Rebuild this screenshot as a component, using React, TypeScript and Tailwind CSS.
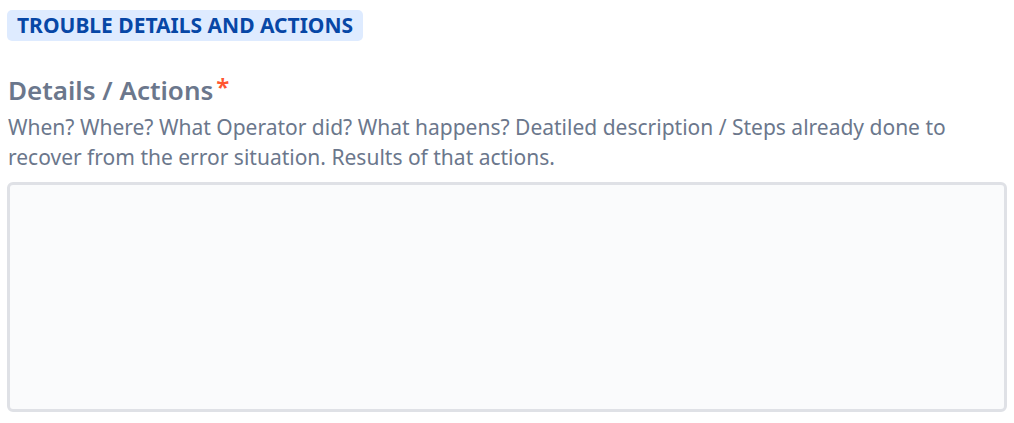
export default function App() {
  return (
    <div className="bg-white w-[1014px] h-[423px] overflow-hidden" style={{ fontFamily: '"Noto Sans", "Open Sans", sans-serif' }}>
      <div className="pl-[7px] pt-[10px]">
        <div className="inline-flex h-[31px] items-center rounded-[5px] bg-[#deebff] px-[10px] text-[21px] font-bold text-[#0747a6]">
          TROUBLE DETAILS AND ACTIONS
        </div>
      </div>
      <div className="pl-[8px] pt-[32px]">
        <div className="flex items-start text-[26px] leading-[34px] font-semibold text-[#6b778c]">
          <span>Details / Actions</span>
          <span className="ml-[3px] text-[#ff5630] text-[24px] leading-[28px]">*</span>
        </div>
        <p className="mt-[5px] pr-[40px] text-[21px] leading-[30px] text-[#6b778c]">
          When? Where? What Operator did? What happens? Deatiled description / Steps already done to recover from the error situation. Results of that actions.
        </p>
      </div>
      <div className="pl-[7px] pr-[7px] pt-[10px]">
        <textarea className="block w-full h-[230px] resize-none rounded-[6px] border-[3px] border-[#dfe1e6] bg-[#fafbfc] outline-none" />
      </div>
    </div>
  );
}
